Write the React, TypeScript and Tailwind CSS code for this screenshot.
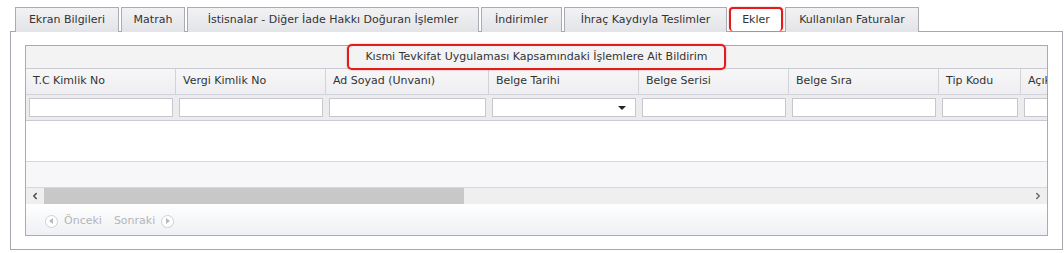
import { ChevronLeft, ChevronRight } from 'lucide-react';

const TABS = [
  { label: 'Ekran Bilgileri', w: 'w-[104px]' },
  { label: 'Matrah', w: 'w-[64px]' },
  { label: 'İstisnalar - Diğer İade Hakkı Doğuran İşlemler', w: 'w-[292px]' },
  { label: 'İndirimler', w: 'w-[81px]' },
  { label: 'İhraç Kaydıyla Teslimler', w: 'w-[163px]' },
  { label: 'Ekler', w: 'w-[54px]', active: true },
  { label: 'Kullanılan Faturalar', w: 'w-[134px]' },
];

const COLUMNS = [
  { label: 'T.C Kimlik No', w: 'w-[150px]' },
  { label: 'Vergi Kimlik No', w: 'w-[150px]' },
  { label: 'Ad Soyad (Unvanı)', w: 'w-[163px]' },
  { label: 'Belge Tarihi', w: 'w-[150px]', select: true },
  { label: 'Belge Serisi', w: 'w-[150px]' },
  { label: 'Belge Sıra', w: 'w-[150px]' },
  { label: 'Tip Kodu', w: 'w-[82px]' },
  { label: 'Açıklama', w: 'w-[150px]' },
];

export default function App() {
  return (
    <div className="w-[1064px] h-[253px] bg-white pt-[7px] pl-[10px] font-['DejaVu_Sans',sans-serif] text-[11px] text-[#333]">
      {/* Sekmeler */}
      <div className="flex gap-[2px] pl-[5px] h-[24px]">
        {TABS.map(t => (
          <div
            key={t.label}
            className={`${t.w} flex items-center justify-center border border-b-0 relative z-10 ${
              t.active
                ? 'bg-white border-[#e41b1b] border-2 rounded-[4px] shadow-[0_0_2px_rgba(200,0,0,0.4)] h-[24px]'
                : 'h-[25px] bg-gradient-to-b from-[#f2f2f4] to-[#e3e4e8] border-[#a9aab3]'
            }`}
          >
            {t.label}
          </div>
        ))}
      </div>

      {/* Panel */}
      <div className="w-[1053px] h-[219px] border border-[#a5a6b0] bg-white pt-[13px] pl-[14px]">
        <div className="w-[1023px] h-[191px] border border-[#a9aab3] flex flex-col">
          {/* Başlık */}
          <div className="h-[23px] shrink-0 bg-[#f3f3f4] flex items-center justify-center border-b border-[#c9cad2] relative z-10">
            <span className="h-[26px] px-[16px] flex items-center border-2 border-[#e41b1b] rounded-[5px] shadow-[0_0_2px_rgba(200,0,0,0.4)] bg-[#f3f3f4]">
              Kısmi Tevkifat Uygulaması Kapsamındaki İşlemlere Ait Bildirim
            </span>
          </div>

          {/* Kolon başlıkları */}
          <div className="flex h-[26px] overflow-hidden bg-gradient-to-b from-[#f7f7f8] to-[#eeeef1] border-b border-[#d2d3da] shrink-0">
            {COLUMNS.map(c => (
              <div key={c.label} className={`${c.w} shrink-0 flex items-center pl-[7px] border-r border-[#d2d3da] whitespace-nowrap`}>
                {c.label}
              </div>
            ))}
          </div>

          {/* Filtre satırı */}
          <div className="flex h-[26px] overflow-hidden bg-[#ececee] border-b border-[#c9cad2] shrink-0">
            {COLUMNS.map(c => (
              <div key={c.label} className={`${c.w} shrink-0 flex items-center px-[3px]`}>
                <div className="w-full h-[19px] bg-white border border-[#c6c7cf] relative">
                  {c.select && (
                    <span className="absolute right-[9px] top-[7px] w-0 h-0 border-l-[4px] border-r-[4px] border-t-[4px] border-l-transparent border-r-transparent border-t-[#222]" />
                  )}
                </div>
              </div>
            ))}
          </div>

          {/* Veri alanı */}
          <div className="h-[41px] bg-white border-b border-[#d8d9de] shrink-0" />
          <div className="h-[26px] bg-[#f7f7f9] border-b border-[#d8d9de] shrink-0" />

          {/* Kaydırma çubuğu */}
          <div className="h-[16px] bg-[#efefef] flex items-center shrink-0">
            <div className="w-[18px] flex justify-center">
              <ChevronLeft className="w-[10px] h-[10px] text-[#444]" strokeWidth={3.5} />
            </div>
            <div className="w-[420px] h-full bg-[#c8c8c8]" />
            <div className="flex-1" />
            <div className="w-[18px] flex justify-center">
              <ChevronRight className="w-[10px] h-[10px] text-[#666]" strokeWidth={3.5} />
            </div>
          </div>

          {/* Sayfalama */}
          <div className="flex-1 bg-gradient-to-b from-[#ffffff] to-[#eef0f4] flex items-center pl-[19px] pt-[3px] text-[#b4b5bb] gap-[6px]">
            <span className="w-[13px] h-[13px] rounded-full border border-[#cfd0d6] bg-white flex items-center justify-center">
              <span className="w-0 h-0 border-t-[3px] border-b-[3px] border-r-[4px] border-t-transparent border-b-transparent border-r-[#b8b9c0] -ml-[1px]" />
            </span>
            <span className="mr-[6px]">Önceki</span>
            <span>Sonraki</span>
            <span className="w-[13px] h-[13px] rounded-full border border-[#cfd0d6] bg-white flex items-center justify-center">
              <span className="w-0 h-0 border-t-[3px] border-b-[3px] border-l-[4px] border-t-transparent border-b-transparent border-l-[#b8b9c0] ml-[1px]" />
            </span>
          </div>
        </div>
      </div>
    </div>
  );
}
